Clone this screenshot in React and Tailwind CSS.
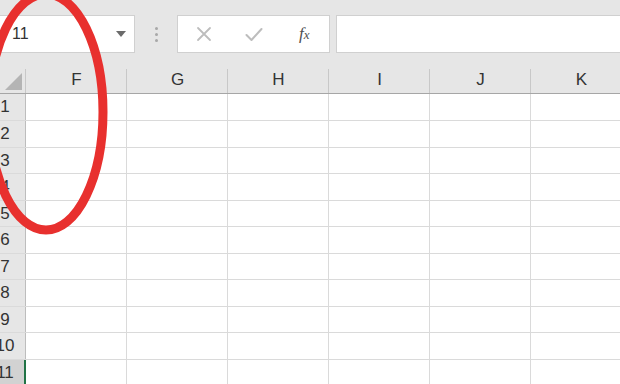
import React from "react";

const cols = ["F", "G", "H", "I", "J", "K"];
const rowHeights = [27, 27, 26, 27, 26, 27, 26, 27, 26, 27, 27];

export default function App() {
  return (
    <div className="relative w-[620px] h-[384px] overflow-hidden bg-white font-['Liberation_Sans',Arial,sans-serif]">
      {/* formula bar */}
      <div className="flex h-[66px] items-start bg-[#e6e6e6] pt-[15px]">
        <div className="flex h-[38px] w-[135px] shrink-0 items-center justify-between border border-l-0 border-[#d0d0d0] bg-white pl-[12px] pr-[8px]">
          <span className="text-[16px] text-[#333]">11</span>
          <svg width="10" height="6" viewBox="0 0 10 6">
            <path d="M0 0 L10 0 L5 6 Z" fill="#6b6b6b" />
          </svg>
        </div>
        <div className="flex h-[38px] w-[42px] shrink-0 flex-col items-center justify-center gap-[3px]">
          <span className="h-[3px] w-[3px] rounded-full bg-[#a8a8a8]" />
          <span className="h-[3px] w-[3px] rounded-full bg-[#a8a8a8]" />
          <span className="h-[3px] w-[3px] rounded-full bg-[#a8a8a8]" />
        </div>
        <div className="flex h-[38px] w-[153px] shrink-0 items-center border border-[#d0d0d0] bg-white">
          <div className="flex w-[50px] justify-center pl-[2px]">
            <svg width="16" height="16" viewBox="0 0 16 16">
              <path d="M2 2 L14 14 M14 2 L2 14" stroke="#bdbdbd" strokeWidth="1.8" strokeLinecap="round" />
            </svg>
          </div>
          <div className="flex w-[52px] justify-center">
            <svg width="18" height="15" viewBox="0 0 18 15">
              <path d="M1.5 8 L6.5 13 L16.5 2" stroke="#bdbdbd" strokeWidth="2" fill="none" strokeLinecap="round" strokeLinejoin="round" />
            </svg>
          </div>
          <div className="flex w-[50px] justify-center">
            <span className="font-['Liberation_Serif',serif] text-[17px] italic text-[#505050]">
              f<span className="text-[13px]">x</span>
            </span>
          </div>
        </div>
        <div className="ml-[6px] h-[38px] flex-1 border border-r-0 border-[#d0d0d0] bg-white" />
      </div>

      {/* column headers */}
      <div className="flex h-[28px] border-b border-[#a6a6a6] bg-[#e6e6e6]">
        <div className="relative flex w-[26px] shrink-0 items-end justify-end pb-[3px] pr-[4px]">
          <svg width="17" height="17" viewBox="0 0 17 17">
            <path d="M17 0 L17 17 L0 17 Z" fill="#b4b4b4" />
          </svg>
          <span className="absolute right-0 top-[3px] h-[24px] w-px bg-[#c8c8c8]" />
        </div>
        {cols.map((c) => (
          <div key={c} className="relative flex w-[101px] shrink-0 items-center justify-center pt-[1px] text-[17px] text-[#333]">
            {c}
            <span className="absolute right-0 top-[3px] h-[24px] w-px bg-[#c8c8c8]" />
          </div>
        ))}
      </div>

      {/* rows */}
      {rowHeights.map((h, i) => {
        const selected = i === 10;
        return (
          <div key={i} className="flex border-b border-[#dadada]" style={{ height: h }}>
            <div
              className={
                selected
                  ? "w-[26px] shrink-0 overflow-hidden border-r-2 border-[#217346] bg-[#d2d2d2]"
                  : "w-[26px] shrink-0 overflow-hidden border-r border-[#bdbdbd] bg-[#e6e6e6]"
              }
            >
              <div className="ml-[-15px] flex h-full w-[40px] items-center justify-center text-[17px] text-[#333]">
                {i + 1}
              </div>
            </div>
            {cols.map((c) => (
              <div key={c} className="w-[101px] shrink-0 border-r border-[#dadada]" />
            ))}
          </div>
        );
      })}

      {/* red annotation */}
      <svg className="pointer-events-none absolute left-0 top-0" width="620" height="384">
        <ellipse cx="46" cy="112" rx="57" ry="118" fill="none" stroke="#e8302e" strokeWidth="9" />
      </svg>
    </div>
  );
}
